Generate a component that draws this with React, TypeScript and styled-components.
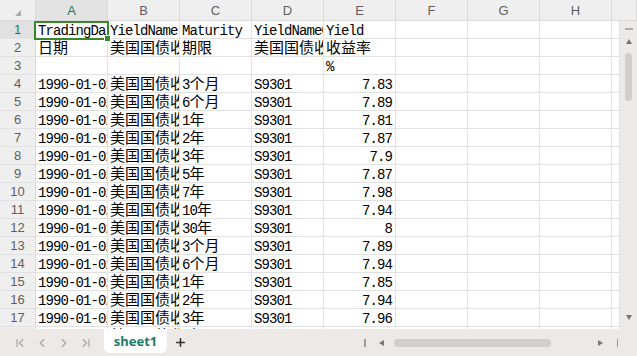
import React from "react";
import styled, { createGlobalStyle } from "styled-components";
import { ChevronFirst, ChevronLeft, ChevronRight, ChevronLast, Plus } from "lucide-react";

const GlobalStyle = createGlobalStyle`
  html, body {
    margin: 0;
    padding: 0;
    background: #fff;
  }
  #root {
    width: 637px;
    height: 356px;
  }
`;

const COLS = "36px repeat(8, 72px) 1fr";
const ACCENT = "#1f7a63";

let Sheet = styled.div`
  width: 637px;
  height: 356px;
  display: flex;
  flex-direction: column;
  overflow: hidden;
  font-family: "Liberation Sans", Arial, sans-serif;
`;

let HeaderRow = styled.div`
  display: grid;
  grid-template-columns: ${COLS};
  height: 21px;
  flex-shrink: 0;
  background: #efefef;
  border-bottom: 1px solid #d9d9d9;
  box-sizing: border-box;
`;

let Corner = styled.div`
  display: flex;
  justify-content: center;
  align-items: flex-end;
  padding-bottom: 4px;
  box-sizing: border-box;
  border-right: 1px solid #dadada;
`;

let CornerMark = styled.span`
  width: 0;
  height: 0;
  border-left: 6px solid transparent;
  border-bottom: 6px solid #a9a9a9;
`;

let ColHead = styled.div<{ $active?: boolean }>`
  display: flex;
  align-items: center;
  justify-content: center;
  font-size: 13px;
  color: ${(p) => (p.$active ? ACCENT : "#5f5f5f")};
  background: ${(p) => (p.$active ? "#e3e3e3" : "transparent")};
  border-right: 1px solid #dadada;
`;

let Body = styled.div`
  display: flex;
  flex: 1;
  min-height: 0;
`;

let GridArea = styled.div`
  flex: 1;
  position: relative;
  overflow: hidden;
  display: flex;
  flex-direction: column;
`;

let Row = styled.div`
  display: grid;
  grid-template-columns: ${COLS};
  height: 18px;
  flex-shrink: 0;
`;

let RowHead = styled.div<{ $active?: boolean }>`
  display: flex;
  align-items: center;
  justify-content: center;
  font-size: 13px;
  color: ${(p) => (p.$active ? ACCENT : "#5f5f5f")};
  background: ${(p) => (p.$active ? "#e1e1e1" : "#efefef")};
  border-right: 1px solid #d9d9d9;
  border-bottom: 1px solid #e2e2e2;
  box-sizing: border-box;
`;

let Cell = styled.div<{ $right?: boolean }>`
  box-sizing: border-box;
  height: 18px;
  border-right: 1px solid #e2e2e2;
  border-bottom: 1px solid #e2e2e2;
  overflow: hidden;
  white-space: nowrap;
  padding: 0 3px 0 2px;
  text-align: ${(p) => (p.$right ? "right" : "left")};
  font-family: "Liberation Mono", "Noto Sans CJK SC", monospace;
  font-size: 14px;
  letter-spacing: -0.9px;
  line-height: 21px;
  color: #000;
`;

let Han = styled.span`
  font-family: "Noto Sans CJK SC", sans-serif;
  font-size: 15px;
  line-height: 0;
  letter-spacing: 0;
`;

let Selection = styled.div`
  position: absolute;
  z-index: 2;
  left: 34px;
  top: 0;
  width: 75px;
  height: 19px;
  box-sizing: border-box;
  border: 2px solid #3b872c;
  pointer-events: none;

  &::after {
    content: "";
    position: absolute;
    right: -4px;
    bottom: -4px;
    width: 5px;
    height: 5px;
    background: #3b872c;
    border: 1px solid #fff;
  }
`;

let VScroll = styled.div`
  width: 17px;
  flex-shrink: 0;
  background: #edebe9;
  display: flex;
  flex-direction: column;
  align-items: center;
  padding: 7px 0 9px;
  box-sizing: border-box;
`;

let Dash = styled.span`
  width: 8px;
  height: 1.5px;
  background: #adadad;
  margin-bottom: 9px;
`;

let Arrow = styled.span<{ $dir: "up" | "down" | "left" | "right" }>`
  width: 0;
  height: 0;
  border: 3px solid transparent;
  ${(p) =>
    p.$dir === "up"
      ? "border-bottom: 5px solid #777; border-top-width: 0;"
      : p.$dir === "down"
      ? "border-top: 5px solid #777; border-bottom-width: 0;"
      : p.$dir === "left"
      ? "border-right: 5px solid #777; border-left-width: 0;"
      : "border-left: 5px solid #777; border-right-width: 0;"}
`;

let VThumb = styled.div`
  width: 7px;
  height: 48px;
  border-radius: 4px;
  background: #d2cecb;
  margin-top: 9px;
`;

let Spacer = styled.div`
  flex: 1;
`;

let BottomBar = styled.div`
  height: 27px;
  flex-shrink: 0;
  display: flex;
  align-items: center;
  background: #ece9e7;
`;

let Nav = styled.div`
  display: flex;
  align-items: center;
  gap: 8px;
  padding-left: 13px;
  color: #a5a5a5;
`;

let Tab = styled.div`
  margin-left: 11px;
  align-self: flex-start;
  width: 63px;
  height: 24px;
  background: #fff;
  border-radius: 0 0 6px 6px;
  display: flex;
  align-items: center;
  justify-content: center;
  font-family: "Noto Sans", "Liberation Sans", sans-serif;
  font-size: 13px;
  font-weight: 700;
  color: ${ACCENT};
`;

let AddButton = styled.div`
  margin-left: 7px;
  display: flex;
  color: #333;
`;

let HScroll = styled.div`
  margin-left: auto;
  padding-right: 19px;
  display: flex;
  align-items: center;
`;

let Bar = styled.span`
  width: 1.5px;
  height: 8px;
  background: #9a9a9a;
`;

let HThumb = styled.div`
  width: 157px;
  height: 8px;
  border-radius: 4px;
  background: #d2cecb;
`;

let Gap = styled.span<{ $w: number }>`
  width: ${(p) => p.$w}px;
`;

type Line = { cells: string[]; right?: boolean[] };

const rows: string[][] = [
  ["TradingDate", "YieldName", "Maturity", "YieldNameCode", "Yield"],
  ["日期", "美国国债收益率名称", "期限", "美国国债收益率代码", "收益率"],
  ["", "", "", "", "%"],
];

const terms: [string, string][] = [
  ["3个月", "7.83"],
  ["6个月", "7.89"],
  ["1年", "7.81"],
  ["2年", "7.87"],
  ["3年", "7.9"],
  ["5年", "7.87"],
  ["7年", "7.98"],
  ["10年", "7.94"],
  ["30年", "8"],
  ["3个月", "7.89"],
  ["6个月", "7.94"],
  ["1年", "7.85"],
  ["2年", "7.94"],
  ["3年", "7.96"],
  ["5年", "7.99"],
];

const lines: Line[] = [
  ...rows.map((cells) => ({ cells })),
  ...terms.map(([term, y]) => ({
    cells: ["1990-01-02", "美国国债收益率", term, "S9301", y],
    right: [false, false, false, false, true],
  })),
];

const letters = ["A", "B", "C", "D", "E", "F", "G", "H", ""];
const HAN = /([\u3000-\u9fff\uff00-\uffef]+)/;

function renderText(text: string) {
  let parts = text.split(HAN).filter(Boolean);
  return parts.map((part, i) =>
    HAN.test(part) ? <Han key={i}>{part}</Han> : <React.Fragment key={i}>{part}</React.Fragment>
  );
}

let App: React.FC = () => {
  return (
    <Sheet>
      <GlobalStyle />
      <HeaderRow>
        <Corner>
          <CornerMark />
        </Corner>
        {letters.map((l, i) => (
          <ColHead key={i} $active={l === "A"}>
            {l}
          </ColHead>
        ))}
      </HeaderRow>
      <Body>
        <GridArea>
          {lines.map((line, r) => (
            <Row key={r}>
              <RowHead $active={r === 0}>{r + 1}</RowHead>
              {Array.from({ length: 9 }).map((_, c) => (
                <Cell key={c} $right={line.right?.[c]}>
                  {renderText(line.cells[c] ?? "")}
                </Cell>
              ))}
            </Row>
          ))}
          <Selection />
        </GridArea>
        <VScroll>
          <Dash />
          <Arrow $dir="up" />
          <VThumb />
          <Spacer />
          <Arrow $dir="down" />
        </VScroll>
      </Body>
      <BottomBar>
        <Nav>
          <ChevronFirst size={14} strokeWidth={2} />
          <ChevronLeft size={14} strokeWidth={2} />
          <ChevronRight size={14} strokeWidth={2} />
          <ChevronLast size={14} strokeWidth={2} />
        </Nav>
        <Tab>sheet1</Tab>
        <AddButton>
          <Plus size={13} strokeWidth={3} />
        </AddButton>
        <HScroll>
          <Bar />
          <Gap $w={13} />
          <Arrow $dir="left" />
          <Gap $w={10} />
          <HThumb />
          <Gap $w={47} />
          <Arrow $dir="right" />
          <Gap $w={14} />
          <Bar />
        </HScroll>
      </BottomBar>
    </Sheet>
  );
};

export default App;
